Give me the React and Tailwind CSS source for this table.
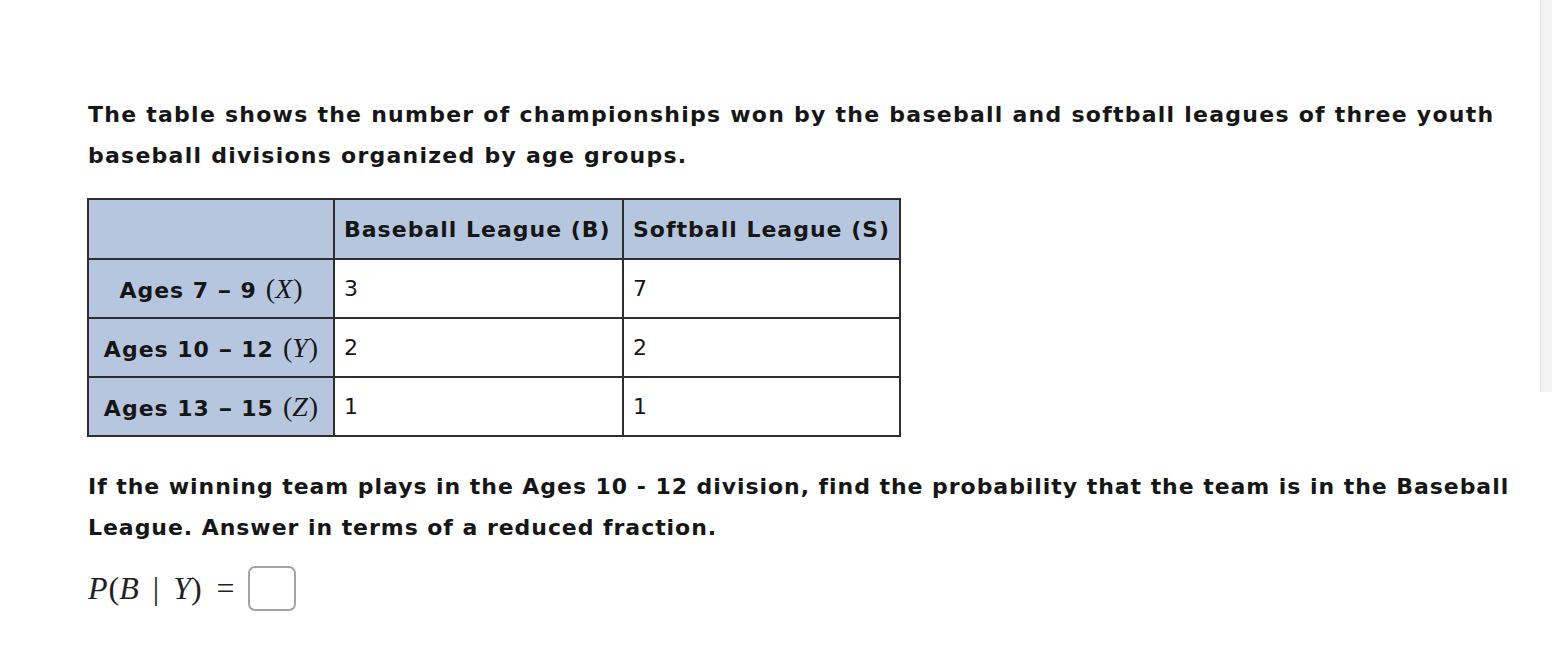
const rows = [
  { from: "7", to: "9", v: "X", b: "3", s: "7" },
  { from: "10", to: "12", v: "Y", b: "2", s: "2" },
  { from: "13", to: "15", v: "Z", b: "1", s: "1" },
];

function MathVar({ v }) {
  return (
    <span className="ml-[9px] font-['Liberation_Serif',serif] font-normal text-[28px] tracking-normal">
      (<span className="italic pr-[1px]">{v}</span>)
    </span>
  );
}

export default function App() {
  return (
    <div className="relative min-h-[670px] bg-white text-[#161616] font-['DejaVu_Sans',sans-serif]">
      <div className="absolute right-0 top-0 w-[12px] h-[392px] bg-[#f3f3f3] border-l border-[#e0e0e0]" />

      <div className="pl-[88px] pt-[94px]">
        <p className="text-[22px] font-bold leading-[41px] tracking-[1.25px] whitespace-nowrap">
          The table shows the number of championships won by the baseball and softball leagues of three youth
          <br />
          baseball divisions organized by age groups.
        </p>

        <table className="mt-[22px] -ml-px table-fixed border-collapse text-[22px] tracking-[1px]">
          <colgroup>
            <col className="w-[246px]" />
            <col className="w-[289px]" />
            <col className="w-[277px]" />
          </colgroup>
          <thead>
            <tr className="h-[60px]">
              <th className="bg-[#b6c6de] border-2 border-[#2e2e2e]"></th>
              <th className="bg-[#b6c6de] border-2 border-[#2e2e2e] font-bold text-left px-[9px] whitespace-nowrap">
                Baseball League (B)
              </th>
              <th className="bg-[#b6c6de] border-2 border-[#2e2e2e] font-bold text-left px-[9px] whitespace-nowrap">
                Softball League (S)
              </th>
            </tr>
          </thead>
          <tbody>
            {rows.map((r) => (
              <tr key={r.v} className="h-[59px]">
                <th className="bg-[#b6c6de] border-2 border-[#2e2e2e] font-bold text-center px-0 whitespace-nowrap">
                  Ages {r.from} <span className="inline-block px-[1px] scale-x-125">–</span> {r.to}
                  <MathVar v={r.v} />
                </th>
                <td className="border-2 border-[#2e2e2e] px-[9px] font-normal">{r.b}</td>
                <td className="border-2 border-[#2e2e2e] px-[9px] font-normal">{r.s}</td>
              </tr>
            ))}
          </tbody>
        </table>

        <p className="mt-[29px] text-[22px] font-bold leading-[41px] tracking-[0.95px] whitespace-nowrap">
          If the winning team plays in the Ages 10 - 12 division, find the probability that the team is in the Baseball
          <br />
          League. Answer in terms of a reduced fraction.
        </p>

        <div className="mt-[16px] flex items-center font-['Liberation_Serif',serif] text-[32px] text-[#222]">
          <span className="italic">P</span>
          <span className="ml-[1px]">(</span>
          <span className="italic">B</span>
          <span className="mx-[14px]">|</span>
          <span className="italic">Y</span>
          <span>)</span>
          <span className="ml-[15px]">=</span>
          <div className="ml-[13px] w-[48px] h-[45px] rounded-[7px] border-2 border-[#a3a3a3]" />
        </div>
      </div>
    </div>
  );
}
